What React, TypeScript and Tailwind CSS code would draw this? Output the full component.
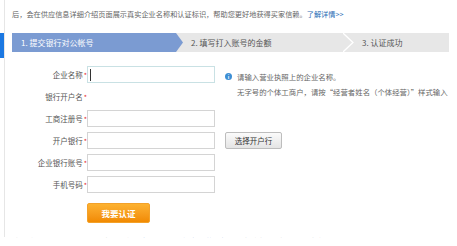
import React from "react";

const rows = [
  { label: "企业名称", input: true, focused: true },
  { label: "银行开户名", input: false },
  { label: "工商注册号", input: true },
  { label: "开户银行", input: true, pick: true },
  { label: "企业银行账号", input: true },
  { label: "手机号码", input: true },
];

function Steps() {
  return (
    <div className="mt-[14px] flex h-[19px] w-[437px] items-center bg-[#e7e7e7] text-[8px] leading-[19px] text-[#555]">
      <div className="h-full w-[171px] shrink-0 bg-[#7b9bd2] pl-[9px] text-white [clip-path:polygon(0_0,calc(100%-7px)_0,100%_50%,calc(100%-7px)_100%,0_100%)]">
        1. 提交银行对公帐号
      </div>
      <div className="h-full w-[160px] shrink-0 pl-[8px]">2. 填写打入账号的金额</div>
      <svg width="11" height="19" viewBox="0 0 11 19" className="shrink-0">
        <polyline points="0,0 10,9.5 0,19" fill="none" stroke="#fff" strokeWidth="1.3" />
      </svg>
      <div className="h-full pl-[8px]">3. 认证成功</div>
    </div>
  );
}

function FormRow({ label, input, focused, pick, children }: any) {
  return (
    <div className="flex h-[22px] items-start">
      <div className="flex h-[18px] w-[75px] shrink-0 items-center justify-end text-[7.5px] text-[#555]">
        {label}
        <span className="ml-[1px] text-[7px] leading-none text-[#e3262a]">*</span>
      </div>
      <div className="w-[128px] shrink-0">
        {input && (
          <div
            className={`flex h-[17px] w-[128px] items-center border bg-white px-[2px] ${
              focused ? "border-[#c9e1e4]" : "border-[#d4d4d4]"
            }`}
          >
            {focused && <span className="h-[12px] w-[1px] bg-[#333]" />}
          </div>
        )}
      </div>
      {pick && (
        <button className="ml-[10px] h-[17px] w-[57px] rounded-[2px] border border-[#bdbdbd] bg-gradient-to-b from-[#fbfbfb] to-[#e4e4e4] text-[7.5px] text-[#333]">
          选择开户行
        </button>
      )}
      {children}
    </div>
  );
}

export default function App() {
  return (
    <div className="flex h-[246px] w-[457px] overflow-hidden bg-white font-['Noto_Sans_CJK_SC',sans-serif]">
      <div className="h-[237px] w-[5px] shrink-0 border-r border-[#e6e6e6]">
        <div className="mt-[33px] h-[25px] w-[4px] bg-[#1b78e2]" />
      </div>
      <div className="flex-1 pl-[7px]">
        <p className="mt-[10px] h-[9px] whitespace-nowrap text-[7.2px] leading-[9px] text-[#666]">
          后，会在供应信息详细介绍页面展示真实企业名称和认证标识，帮助您更好地获得买家信赖。
          <span className="text-[#1f6cb5]">了解详情&gt;&gt;</span>
        </p>
        <Steps />
        <div className="mt-[14px]">
          {rows.map((r, i) => (
            <FormRow key={i} {...r}>
              {i === 0 && (
                <div className="ml-[10px] mt-[3px] flex flex-col whitespace-nowrap text-[7.4px] leading-[15px] text-[#666]">
                  <div className="flex items-center">
                    <span className="mr-[5px] flex h-[7px] w-[7px] items-center justify-center rounded-full bg-[#3d8ed4] text-[5px] font-bold leading-none text-white">
                      i
                    </span>
                    请输入营业执照上的企业名称。
                  </div>
                  <div className="pl-[12px]">无字号的个体工商户，请按“经营者姓名（个体经营）”样式输入</div>
                </div>
              )}
            </FormRow>
          ))}
          <button className="ml-[75px] mt-[5px] h-[20px] w-[63px] rounded-[2px] border border-[#f3a12a] bg-gradient-to-b from-[#fdb230] to-[#f18a00] text-[8.5px] font-bold text-white">
            我要认证
          </button>
          <div className="mt-[13px] h-[2px] overflow-hidden whitespace-nowrap text-[8px] leading-[12px] text-[#999]">
            注：企业银行账号必须为对公账户，
            <span className="text-[#4d6fd6]">查看银行账户填写说明帮助</span>
            ，如有疑问请联系在线客服
          </div>
        </div>
      </div>
    </div>
  );
}
